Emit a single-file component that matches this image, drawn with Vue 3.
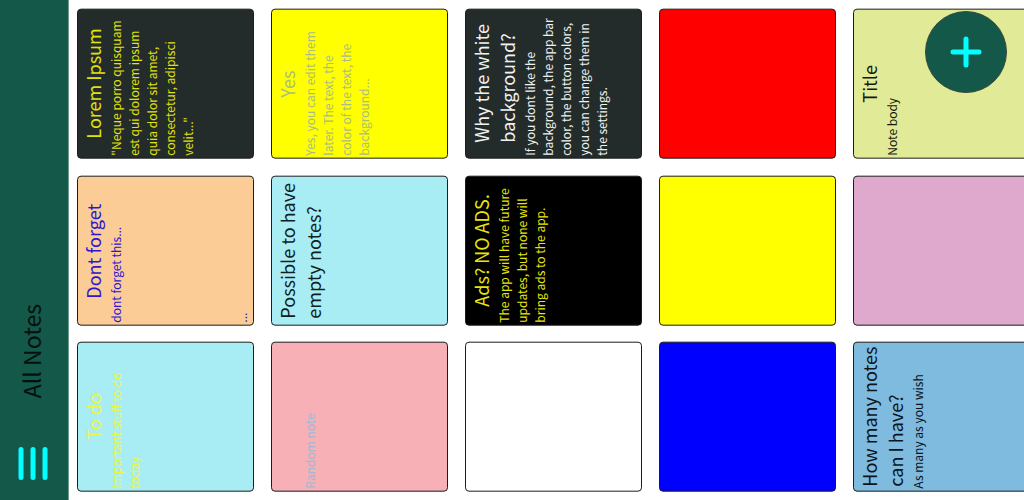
<script setup>
const notes = [
  { title: 'Lorem Ipsum', body: '"Neque porro quisquam est qui dolorem ipsum quia dolor sit amet, consectetur, adipisci velit..."', tone: 'charcoal-yellow' },
  { title: 'Dont forget', body: 'dont forget this...\n\n\n\n\n\n\n...', tone: 'peach' },
  { title: 'To do', body: 'Important stuff to do today', tone: 'aqua-yellow' },
  { title: 'Yes', body: 'Yes, you can edit them later. The text, the\ncolor of the text, the background...', tone: 'yellow' },
  { title: 'Possible to have\nempty notes?', body: '', tone: 'aqua' },
  { title: '', body: 'Random note', tone: 'pink' },
  { title: 'Why the white\nbackground?', body: 'If you dont like the background, the app bar color, the button colors, you can change them in the settings.', tone: 'charcoal' },
  { title: 'Ads? NO ADS.', body: 'The app will have future updates, but none will bring ads to the app.', tone: 'black' },
  { title: '', body: '', tone: 'white' },
  { title: '', body: '', tone: 'red' },
  { title: '', body: '', tone: 'yellow' },
  { title: '', body: '', tone: 'blue' },
  { title: 'Title', body: 'Note body', tone: 'lime' },
  { title: '', body: '', tone: 'orchid' },
  { title: 'How many notes\ncan I have?', body: 'As many as you wish', tone: 'sky' },
]
</script>

<template>
  <div class="app">
    <header class="bar">
      <h1 class="heading">All Notes</h1>
      <button class="menu" type="button" aria-label="Menu">
        <svg width="30" height="36" viewBox="0 0 30 36" fill="none" stroke="#00ffff" stroke-width="5" stroke-linecap="round">
          <path d="M3 3.500V31.500M15 3.500V31.500M27 3.500V31.500" />
        </svg>
      </button>
    </header>
    <main class="notes">
      <article v-for="(note, i) in notes" :key="i" class="note" :class="note.tone">
        <h2 class="title">{{ note.title }}</h2>
        <p class="body">{{ note.body }}</p>
      </article>
    </main>
    <button class="add" type="button" aria-label="Add note">
      <svg width="32" height="32" viewBox="0 0 32 32" fill="none" stroke="#00ffff" stroke-width="5" stroke-linecap="round">
        <path d="M16 3V29M3 16H29" />
      </svg>
    </button>
  </div>
</template>

<style>
body {
  margin: 0;
  background: #fff;
}
</style>

<style scoped>
.app {
  position: relative;
  display: flex;
  height: 100vh;
  overflow: hidden;
  font-family: "Noto Sans CJK JP", "Noto Sans", sans-serif;
}
.bar {
  flex: none;
  box-sizing: border-box;
  width: 69px;
  padding-right: 3px;
  padding-bottom: 18px;
  display: flex;
  flex-direction: column;
  align-items: center;
  justify-content: flex-end;
  gap: 48px;
  background: #135849;
  border-right: 1px solid #6f9a90;
}
.heading {
  margin: 0 4px 0 0;
  writing-mode: vertical-rl;
  transform: rotate(180deg);
  font-size: 23px;
  line-height: 32px;
  font-weight: 400;
  color: #04110e;
}
.menu {
  display: flex;
  padding: 0;
  border: 0;
  background: none;
}
.notes {
  flex: 1;
  min-width: 0;
  display: grid;
  grid-auto-flow: column;
  grid-template-rows: repeat(3, minmax(0, 1fr));
  grid-auto-columns: 177px;
  gap: 17px;
  padding: 9px 0 8px 8px;
}
.note {
  box-sizing: border-box;
  writing-mode: vertical-rl;
  transform: rotate(180deg);
  padding: 2px;
  border: 1px solid #1c1c1c;
  border-radius: 4px;
  overflow: hidden;
}
.title {
  inline-size: fit-content;
  min-block-size: 26px;
  margin-block: 0;
  margin-inline: auto;
  font-size: 18px;
  line-height: 26px;
  font-weight: 400;
  white-space: pre-line;
}
.body {
  margin: 0;
  margin-block-start: 1px;
  font-size: 12px;
  line-height: 18px;
  white-space: pre-line;
}
.charcoal-yellow { background: #242c2b; color: #e1e10c; }
.charcoal { background: #242c2b; color: #f0f2f2; }
.peach { background: #fbcc96; color: #2c16d2; }
.aqua { background: #a7edf3; color: #102022; }
.aqua-yellow { background: #a7edf3; color: #eef53a; }
.yellow { background: #ffff00; color: #a9bd83; }
.pink { background: #f6b0b6; color: #a3b8d2; }
.black { background: #000; color: #e6e60c; }
.white { background: #fff; }
.red { background: #ff0000; }
.blue { background: #0000ff; }
.lime { background: #e1eb97; color: #16180f; }
.orchid { background: #dfa9cd; }
.sky { background: #7fbadf; color: #0c151b; }
.add {
  position: absolute;
  top: 11px;
  right: 17px;
  width: 82px;
  height: 82px;
  padding: 0;
  display: flex;
  align-items: center;
  justify-content: center;
  border: 1px solid #3b4a3c;
  border-radius: 50%;
  background: #135849;
}
</style>
